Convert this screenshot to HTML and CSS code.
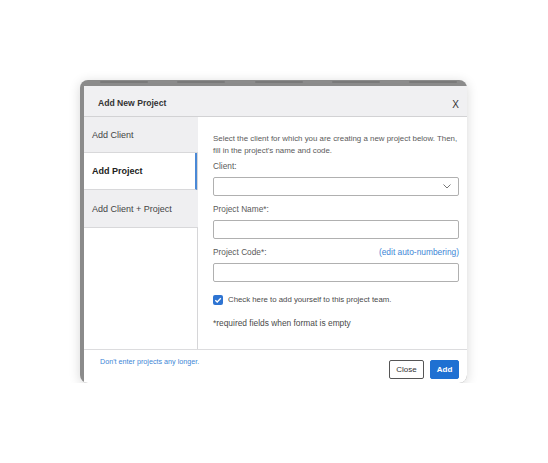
FILE: index.html
```html
<!DOCTYPE html>
<html>
<head>
<meta charset="utf-8">
<link rel="stylesheet" href="styles.css">
</head>
<body>
<div class="card">
  <div class="backdrop-text">
    <span></span><span></span><span></span><span></span><span></span>
  </div>
  <div class="modal">
    <div class="header">
      <div class="title">Add New Project</div>
      <div class="close-x">X</div>
    </div>
    <div class="body">
      <div class="sidebar">
        <div class="tab">Add Client</div>
        <div class="tab active">Add Project</div>
        <div class="tab">Add Client + Project</div>
      </div>
      <div class="main">
        <p class="desc">Select the client for which you are creating a new project below. Then, fill in the project's name and code.</p>
        <div class="label first">Client:</div>
        <div class="select">
          <svg class="chev" width="8" height="5" viewBox="0 0 8 5"><path d="M0.5 0.5 L4 4 L7.5 0.5" fill="none" stroke="#777" stroke-width="1"/></svg>
        </div>
        <div class="label gap">Project Name*:</div>
        <div class="input"></div>
        <div class="label-row">
          <span class="label">Project Code*:</span>
          <span class="link">(edit auto-numbering)</span>
        </div>
        <div class="input"></div>
        <div class="check-row">
          <span class="checkbox">
            <svg width="10" height="10" viewBox="0 0 10 10"><path d="M2.3 5.2 L4.2 7 L7.8 3.2" fill="none" stroke="#fff" stroke-width="1.3"/></svg>
          </span>
          <span class="check-text">Check here to add yourself to this project team.</span>
        </div>
        <div class="note">*required fields when format is empty</div>
      </div>
    </div>
    <div class="footer">
      <span class="footer-link">Don't enter projects any longer.</span>
      <div class="buttons">
        <button class="btn btn-close">Close</button>
        <button class="btn btn-add">Add</button>
      </div>
    </div>
  </div>
</div>
</body>
</html>
```

FILE: styles.css
```css
html, body {
  margin: 0;
  padding: 0;
  background: #ffffff;
  font-family: "Liberation Sans", Arial, sans-serif;
}

.card {
  margin: 80px 0 0 80px;
  width: 387px;
  height: 303px;
  box-sizing: border-box;
  background: #8b8b8b;
  border-radius: 8px;
  overflow: hidden;
  padding: 6px 0 0 4px;
  box-shadow: 0 2px 12px rgba(0, 0, 0, 0.16);
  position: relative;
}

.backdrop-text {
  position: absolute;
  top: 1px;
  left: 20px;
  right: 10px;
  height: 3px;
  display: flex;
  justify-content: space-between;
}

.backdrop-text span {
  width: 48px;
  height: 2px;
  background: #7a7a7a;
  border-radius: 1px;
}

.modal {
  background: #ffffff;
  height: 100%;
  display: flex;
  flex-direction: column;
}

.header {
  height: 31px;
  flex: none;
  box-sizing: border-box;
  background: #f0f0f2;
  border-bottom: 1px solid #d2d2d4;
  display: flex;
  justify-content: space-between;
  padding: 0 8px 0 14px;
}

.title {
  font-weight: bold;
  font-size: 8.6px;
  color: #333;
  line-height: 12px;
  margin-top: 11px;
}

.close-x {
  font-size: 10px;
  color: #333;
  line-height: 12px;
  margin-top: 13px;
}

.body {
  flex: 1;
  display: flex;
  min-height: 0;
}

.sidebar {
  width: 114px;
  flex: none;
  box-sizing: border-box;
  border-right: 1px solid #d6d6d8;
  display: flex;
  flex-direction: column;
}

.tab {
  box-sizing: border-box;
  height: 36px;
  background: #efeff1;
  border-bottom: 1px solid #d8d8da;
  font-size: 9px;
  color: #444;
  padding-left: 8px;
  display: flex;
  align-items: center;
  margin-right: -1px;
}

.tab:nth-child(2) {
  height: 37px;
}

.tab:nth-child(3) {
  height: 38px;
}

.tab.active {
  background: #ffffff;
  font-weight: bold;
  color: #222;
  border-right: 2px solid #4a89d6;
  margin-right: 0;
}

.main {
  flex: 1;
  padding: 16px 8px 0 15px;
  display: flex;
  flex-direction: column;
}

.desc {
  margin: 0 -6px 0 0;
  font-size: 7.9px;
  line-height: 12px;
  color: #5a5a5a;
}

.label {
  font-size: 8.3px;
  line-height: 12px;
  color: #5a5a5a;
}

.label.first {
  margin-top: 3px;
}

.gap {
  margin-top: 7px;
}

.label-row {
  display: flex;
  justify-content: space-between;
  align-items: center;
  margin-top: 7px;
}

.link {
  font-size: 8.4px;
  line-height: 12px;
  color: #3d86d6;
}

.select {
  margin-top: 5px;
  height: 19px;
  box-sizing: border-box;
  border: 1px solid #b0b0b0;
  border-radius: 2px;
  display: flex;
  align-items: center;
  justify-content: flex-end;
  padding-right: 7px;
}

.input {
  margin-top: 5px;
  height: 19px;
  box-sizing: border-box;
  border: 1px solid #b0b0b0;
  border-radius: 2px;
}

.check-row {
  margin-top: 12px;
  display: flex;
  align-items: center;
}

.checkbox {
  width: 10px;
  height: 10px;
  background: #2e74d2;
  border-radius: 2px;
  display: flex;
}

.check-text {
  margin-left: 5px;
  font-size: 7.8px;
  color: #4a4a4a;
  line-height: 12px;
}

.note {
  margin-top: 11px;
  font-size: 8.4px;
  color: #4a4a4a;
  line-height: 12px;
}

.footer {
  height: 34px;
  flex: none;
  box-sizing: border-box;
  border-top: 1px solid #dcdcde;
  display: flex;
  justify-content: space-between;
  padding: 0 8px 0 16px;
}

.footer-link {
  font-size: 7.2px;
  color: #3d86d6;
  line-height: 10px;
  margin-top: 7px;
}

.buttons {
  display: flex;
  gap: 6px;
  margin-top: 10px;
}

.btn {
  height: 19px;
  box-sizing: border-box;
  border-radius: 2px;
  font-family: "Liberation Sans", Arial, sans-serif;
  font-size: 8px;
  padding: 0;
  margin: 0;
}

.btn-close {
  width: 35px;
  background: #ffffff;
  border: 1px solid #555;
  color: #333;
}

.btn-add {
  width: 29px;
  background: #1f70d2;
  border: 1px solid #1f70d2;
  color: #ffffff;
  font-weight: bold;
}
```
